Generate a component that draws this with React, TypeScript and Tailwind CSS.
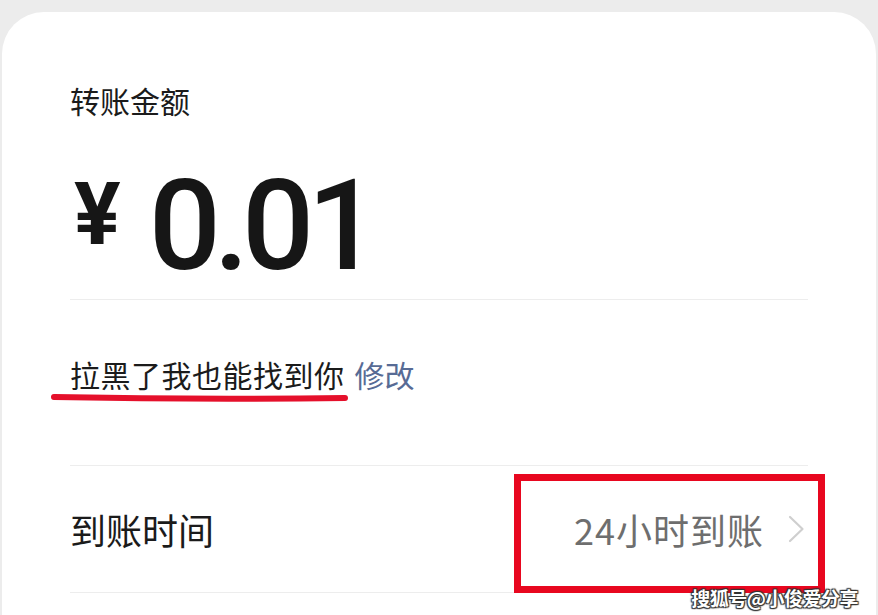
const cjk = { fontFamily: '"Noto Sans CJK SC", "Noto Sans", sans-serif' };
const num = { fontFamily: 'Roboto, "Noto Sans CJK SC", sans-serif' };

function Chevron() {
  return (
    <svg width="17" height="28" viewBox="0 0 17 28" fill="none" className="shrink-0">
      <path d="M2 2 L14.5 14 L2 26" stroke="#cfcfcf" strokeWidth="2.2" strokeLinecap="round" strokeLinejoin="round" />
    </svg>
  );
}

export default function App() {
  return (
    <div className="w-[878px] h-[615px] overflow-hidden bg-[#ececec] pt-3 px-[2px]" style={cjk}>
      <div className="relative h-full bg-white rounded-t-[42px] px-[68px] pt-[73px]">
        <div className="text-[30px] leading-none text-[#1b1b1b]">转账金额</div>

        <div className="flex items-start mt-[47px] h-[127px] text-[#161616]" style={num}>
          <span className="ml-1 mt-[9px] text-[87px] leading-none font-bold">¥</span>
          <span className="ml-[28px] text-[127px] leading-none font-medium tracking-[-7px]">0.01</span>
        </div>

        <div className="mt-[10px] h-px bg-[#ededed]" />

        <div className="relative mt-[59px] flex items-center text-[30px] leading-none">
          <span className="text-[#1b1b1b] tracking-[0.5px]">拉黑了我也能找到你</span>
          <span className="ml-[10px] text-[#576b95]">修改</span>
          <svg className="absolute left-[-20px] top-[33px]" width="300" height="12" viewBox="0 0 300 12" fill="none">
            <path d="M4 5 Q150 8 295 6" stroke="#e5102b" strokeWidth="6" strokeLinecap="round" />
          </svg>
        </div>

        <div className="mt-[76px] h-px bg-[#ededed]" />

        <div className="relative flex items-center justify-between h-[126px]">
          <span className="text-[36px] leading-none text-[#1b1b1b]">到账时间</span>
          <div className="flex items-center gap-[24px] mr-[3px]">
            <span className="text-[36px] leading-none text-[#6e6e6e] tracking-[1px]">24小时到账</span>
            <Chevron />
          </div>
          <div className="absolute left-[444px] top-[8px] w-[311px] h-[119px] border-[7px] border-[#e8071f]" />
        </div>

        <div className="h-px bg-[#ededed]" />

        <div
          className="absolute right-[18px] bottom-[8px] text-[19px] leading-none font-bold text-white tracking-[-0.5px]"
          style={{ textShadow: '0 0 2px #333, 1px 1px 1px #333, -1px -1px 1px #333, 1px -1px 1px #333, -1px 1px 1px #333' }}
        >
          搜狐号@小俊爱分享
        </div>
      </div>
    </div>
  );
}
